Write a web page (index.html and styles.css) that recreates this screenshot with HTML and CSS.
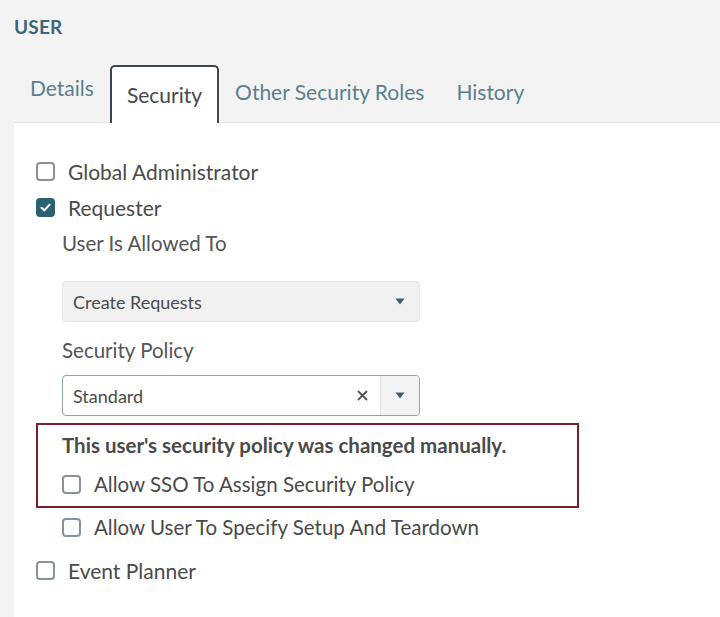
FILE: index.html
```html
<!DOCTYPE html>
<html lang="en">
<head>
    <meta charset="UTF-8">
    <meta name="viewport" content="width=device-width, initial-scale=1.0">
    <title>User Security</title>
    <link rel="stylesheet" href="styles.css">
</head>
<body>
    <div class="page-header">
        <h1>USER</h1>
    </div>

    <!-- Tabs -->
    <div class="tabs">
        <div class="tab tab-raised">Details</div>
        <div class="tab active">Security</div>
        <div class="tab">Other Security Roles</div>
        <div class="tab">History</div>
    </div>

    <div class="panel">
        <label class="check-row">
            <span class="box"></span>
            <span>Global Administrator</span>
        </label>
        <label class="check-row">
            <span class="box checked">
                <svg width="13" height="13" viewBox="0 0 13 13"><path d="M2.5 6.8 L5.3 9.4 L10.6 3.6" fill="none" stroke="#fff" stroke-width="2" stroke-linecap="round" stroke-linejoin="round"/></svg>
            </span>
            <span>Requester</span>
        </label>

        <div class="nested">
            <div class="field-label">User Is Allowed To</div>
            <div class="select disabled">
                <span class="select-value">Create Requests</span>
                <span class="arrow">
                    <svg width="10" height="7" viewBox="0 0 10 7"><polygon points="0.5,0.5 9.5,0.5 5,6.5" fill="#3c6272"/></svg>
                </span>
            </div>

            <div class="field-label policy-label">Security Policy</div>
            <div class="select">
                <span class="select-value">Standard</span>
                <span class="clear">
                    <svg width="11" height="11" viewBox="0 0 11 11"><path d="M1.5 1.5 L9.5 9.5 M9.5 1.5 L1.5 9.5" stroke="#555" stroke-width="1.8" stroke-linecap="round"/></svg>
                </span>
                <span class="arrow split">
                    <svg width="10" height="7" viewBox="0 0 10 7"><polygon points="0.5,0.5 9.5,0.5 5,6.5" fill="#3c6272"/></svg>
                </span>
            </div>
        </div>

        <!-- Manual policy warning -->
        <div class="notice">
            <div class="notice-text">This user's security policy was changed manually.</div>
            <label class="check-row sub">
                <span class="box"></span>
                <span>Allow SSO To Assign Security Policy</span>
            </label>
        </div>

        <div class="nested">
            <label class="check-row sub setup-row">
                <span class="box"></span>
                <span>Allow User To Specify Setup And Teardown</span>
            </label>
        </div>

        <label class="check-row planner-row">
            <span class="box"></span>
            <span>Event Planner</span>
        </label>
    </div>
</body>
</html>
```

FILE: styles.css
```css
body {
    margin: 0;
    background: #f3f3f3;
    font-family: Lato, 'Open Sans', sans-serif;
    color: #4a4a4a;
    height: 617px;
    display: flex;
    flex-direction: column;
    overflow: hidden;
}

.page-header {
    padding: 15px 14px 0;
    height: 49px;
}

h1 {
    margin: 0;
    font-size: 19px;
    font-weight: bold;
    color: #3e6676;
    letter-spacing: 0.2px;
}

.tabs {
    display: flex;
    align-items: flex-end;
    padding-left: 14px;
    height: 58px;
    position: relative;
    z-index: 1;
}

.tab {
    padding: 0 16px;
    height: 56px;
    line-height: 52px;
    font-size: 21px;
    color: #5a7f8e;
    box-sizing: border-box;
}

.tab-raised {
    line-height: 44px;
}

.tab.active {
    background: #fff;
    color: #474747;
    border: 2px solid #3a474d;
    border-bottom: none;
    border-radius: 5px 5px 0 0;
    padding: 0 15px;
    height: 58px;
    line-height: 56px;
    margin-bottom: -1px;
}

.panel {
    flex: 1;
    background: #fff;
    margin-left: 14px;
    border-top: 1px solid #e6e6e6;
    padding: 30px 0 0 22px;
}

.check-row {
    display: flex;
    align-items: center;
    height: 36px;
    font-size: 21px;
    color: #4a4a4a;
}

.box {
    width: 19px;
    height: 19px;
    box-sizing: border-box;
    border: 2px solid #87939a;
    border-radius: 4px;
    margin-right: 13px;
    display: flex;
    align-items: center;
    justify-content: center;
    flex-shrink: 0;
}

.box.checked {
    background: #2a6273;
    border-color: #2a6273;
}

.nested {
    padding-left: 26px;
}

.field-label {
    height: 36px;
    line-height: 36px;
    font-size: 20.5px;
    color: #555;
}

.policy-label {
    margin-top: 10px;
}

.select {
    width: 358px;
    height: 41px;
    box-sizing: border-box;
    border: 1.5px solid #8ea3ab;
    border-radius: 4px;
    display: flex;
    align-items: center;
    font-size: 18px;
    color: #4a4a4a;
    margin-top: 7px;
    overflow: hidden;
}

.select.disabled {
    background: #f1f1f1;
    border-color: #e6e6e6;
    margin-top: 20px;
}

.select-value {
    flex: 1;
    padding-left: 10px;
}

.clear {
    width: 24px;
    display: flex;
    justify-content: center;
    margin-right: 6px;
}

.arrow {
    width: 38px;
    height: 100%;
    display: flex;
    align-items: center;
    justify-content: center;
}

.arrow.split {
    background: #f3f3f3;
    border-left: 1px solid #e4e4e4;
}

.notice {
    width: 543px;
    box-sizing: border-box;
    border: 2px solid #7d1f2b;
    margin-top: 7px;
    padding: 2px 0 1px 24px;
}

.notice-text {
    height: 36px;
    line-height: 36px;
    font-size: 20.5px;
    font-weight: bold;
    color: #4a4a4a;
}

.check-row.sub {
    height: 42px;
    font-size: 20.5px;
}

.setup-row {
    margin-top: 1px;
}

.check-row.sub.setup-row {
    height: 36px;
}

.planner-row {
    margin-top: 7px;
}
```
